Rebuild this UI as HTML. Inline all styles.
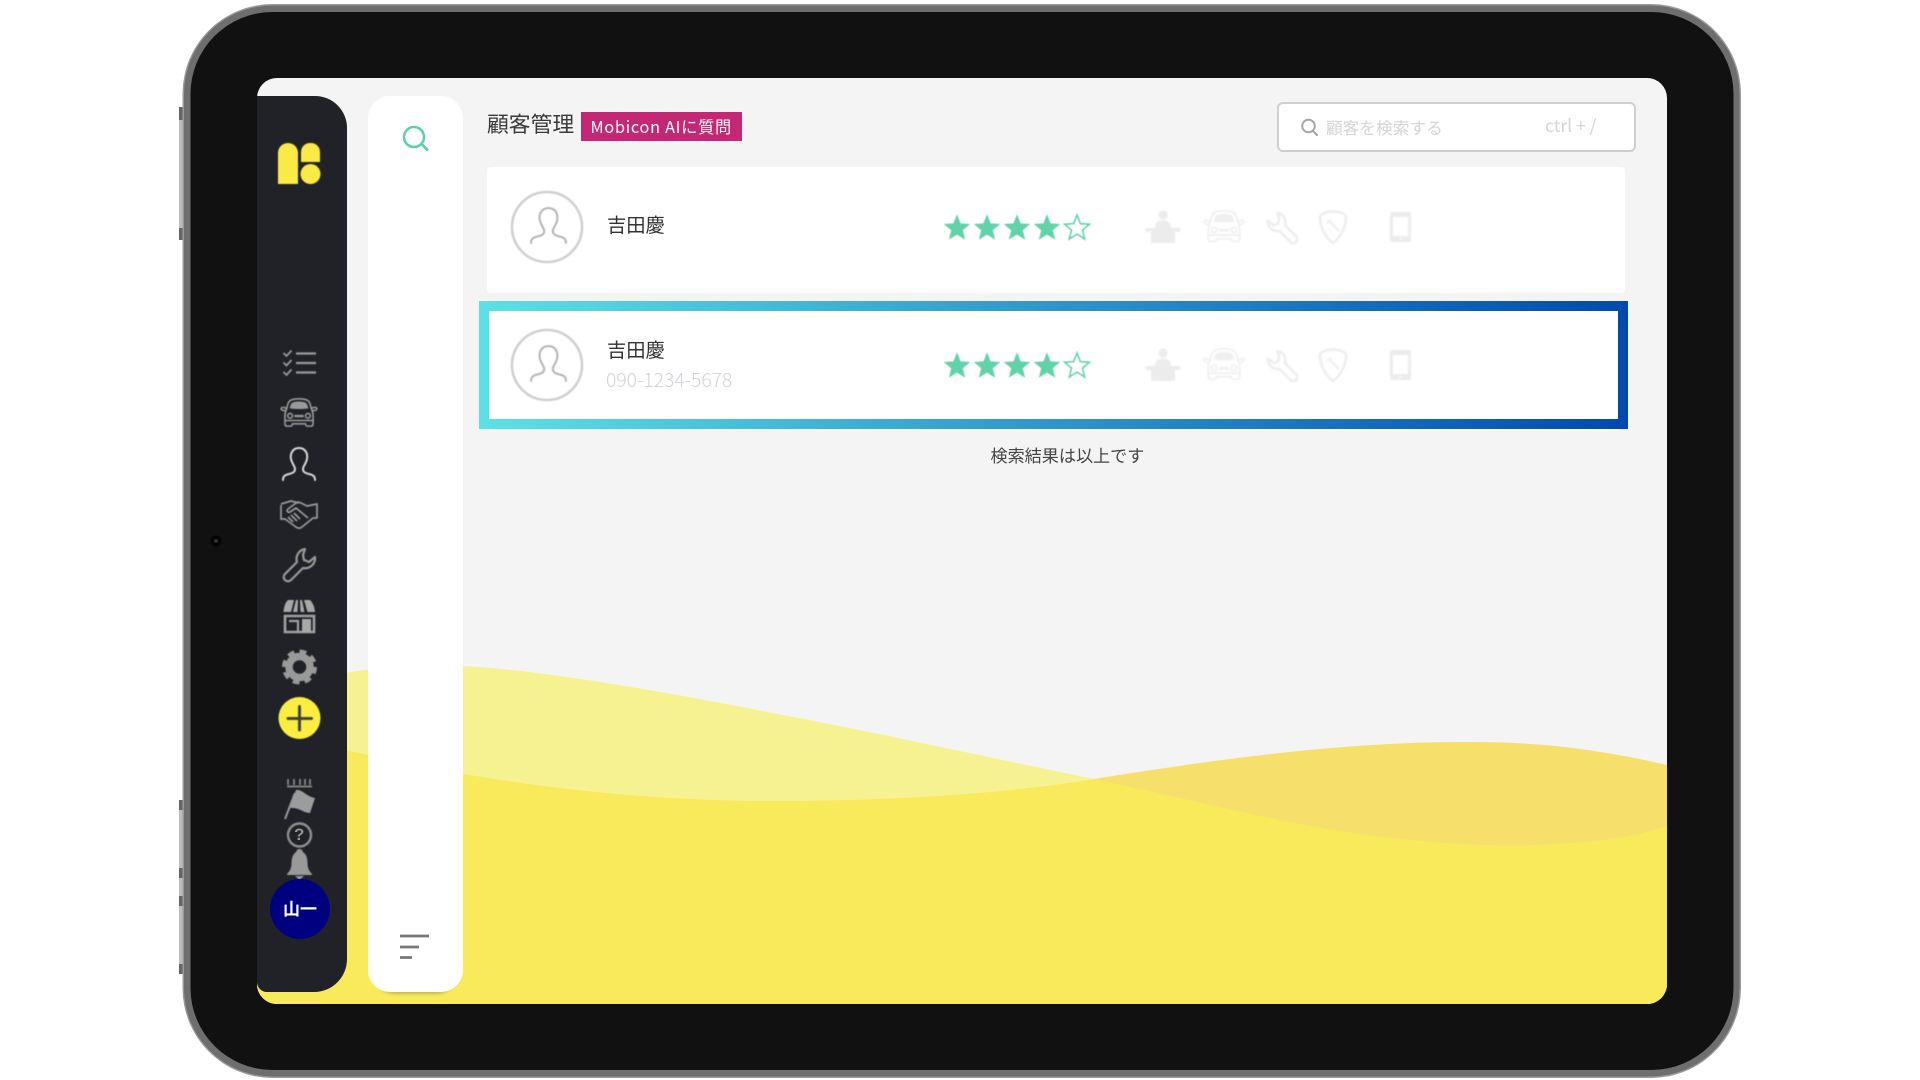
<!DOCTYPE html>
<html lang="ja"><head><meta charset="utf-8"><title>顧客管理</title>
<style>
html,body{margin:0;padding:0;width:1920px;height:1080px;background:#fff;overflow:hidden}
svg.main{position:absolute;left:0;top:0}
.t{position:absolute;white-space:nowrap;font-family:"Noto Sans CJK JP","Liberation Sans",sans-serif;line-height:1;filter:blur(.35px)}
</style></head><body>
<svg class="main" width="1920" height="1080" viewBox="0 0 1920 1080" xmlns="http://www.w3.org/2000/svg">
<defs>
<linearGradient id="g" x1="0" x2="1" y1="0" y2="0"><stop offset="0" stop-color="#5ce1e6"/><stop offset="1" stop-color="#004aad"/></linearGradient>
<clipPath id="sc"><rect x="257" y="78" width="1410" height="926" rx="20"/></clipPath>
<filter id="b"><feGaussianBlur stdDeviation=".5"/></filter>
<filter id="sh" x="-20%" y="-20%" width="140%" height="140%"><feGaussianBlur stdDeviation="1.5"/></filter>
<symbol id="person" viewBox="0 0 34 34"><path d="M1 33C1 29 3 28 7 27C11 26 13 25 13 22C13 19 10 17 9 12C8 6 11 1 17 1C23 1 26 6 25 12C24 17 21 19 21 22C21 25 23 26 27 27C31 28 33 29 33 33" fill="none" stroke="currentColor" stroke-width="2" stroke-linecap="round"/></symbol>
<symbol id="star" viewBox="0 0 28 28"><path d="M14 1.2L17.6 10.4L27.3 11L19.8 17.3L22.2 26.8L14 21.6L5.8 26.8L8.2 17.3L.7 11L10.4 10.4Z"/></symbol>
<g id="stars"><use href="#star" x="943" y="0" width="28" height="28" fill="#62d2a9"/><use href="#star" x="973" y="0" width="28" height="28" fill="#62d2a9"/><use href="#star" x="1003" y="0" width="28" height="28" fill="#62d2a9"/><use href="#star" x="1033" y="0" width="28" height="28" fill="#62d2a9"/><path transform="translate(1064 1) scale(.93)" d="M14 1.2L17.6 10.4L27.3 11L19.8 17.3L22.2 26.8L14 21.6L5.8 26.8L8.2 17.3L.7 11L10.4 10.4Z" fill="#fff" stroke="#62d2a9" stroke-width="1.8"/></g>
<symbol id="car" viewBox="0 0 40 32"><g fill="none" stroke="currentColor" stroke-width="1.700" stroke-linejoin="round"><path d="M7 30C5 30 5 28 5 26V19C5 15 6 13 7 11C8 6 9 3 12 2C16 .5 24 .5 28 2C31 3 32 6 33 11C34 13 35 15 35 19V26C35 28 35 30 33 30H29C28 30 27 29 27 27.500H13C13 29 12 30 11 30Z"/><path d="M7 11.500C5 9.500 1 9.500 1 11.500C1 13.500 4 13.500 6 13.500M33 11.500C35 9.500 39 9.500 39 11.500C39 13.500 36 13.500 34 13.500"/><circle cx="10.500" cy="19" r="2.500"/><circle cx="29.500" cy="19" r="2.500"/><path d="M5 24H35"/></g><path d="M10 11C11 7 12 5 14 4.500C18 3.500 22 3.500 26 4.500C28 5 29 7 30 11C24 12 16 12 10 11Z" fill="currentColor"/><rect x="15" y="18" width="10" height="2.500" fill="currentColor"/></symbol>
<g id="rowicons" color="#efefef" filter="url(#b)">
<circle cx="1163" cy="3" r="4.600" fill="#ececec"/>
<path d="M1155 16C1155 10 1159 8.500 1163 8.500C1167 8.500 1171 10 1171 16H1179C1181 16 1181 20 1179 20H1175V31H1151V20H1147C1145 20 1145 16 1147 16Z" fill="#ececec"/>
<use href="#car" x="1203" y="-2" width="42" height="33.500"/>
<path transform="translate(1299 -1) scale(-.94 .94)" d="M23 2a10 10 0 0 0-8 13L3 27a4 4 0 0 0 6 6l12-12a10 10 0 0 0 12-11l-6 5-5-2-1-5z" fill="none" stroke="#ececec" stroke-width="2.600" stroke-linejoin="round"/>
<path d="M1333 -.5C1326 -.5 1320 2.500 1320 5C1320 15 1325 25 1333 31C1341 25 1346 15 1346 5C1346 2.500 1340 -.5 1333 -.5Z" fill="none" stroke="#ececec" stroke-width="2.400"/>
<path d="M1329 9L1339 19M1327 11l4-3" fill="none" stroke="#f0f0f0" stroke-width="2.600"/>
<rect x="1390" y="0" width="21" height="30" rx="2" fill="#ececec"/><rect x="1393" y="5" width="15" height="19" fill="#fff"/><circle cx="1400.500" cy="27" r="1" fill="#fff"/>
</g>
</defs>

<!-- side buttons -->
<rect x="179" y="107" width="5" height="133" fill="#bdbdbd"/><rect x="179" y="107" width="5" height="13" fill="#666"/><rect x="179" y="228" width="5" height="12" fill="#666"/>
<rect x="179" y="800" width="5" height="173" fill="#bdbdbd"/><rect x="179" y="800" width="5" height="10" fill="#666"/><rect x="179" y="868" width="5" height="10" fill="#666"/><rect x="179" y="896" width="5" height="10" fill="#666"/><rect x="179" y="964" width="5" height="10" fill="#666"/>
<!-- frame -->
<rect x="182.500" y="4" width="1558.500" height="1074" rx="90" fill="#9a9a9a"/>
<rect x="184" y="5.500" width="1555.500" height="1071" rx="88" fill="#6e6e6e"/>
<rect x="190.500" y="12" width="1543" height="1058" rx="82" fill="#111"/>
<circle cx="216" cy="541" r="5.500" fill="#040404"/><circle cx="216" cy="541" r="1.800" fill="#3a3a3a"/>

<!-- screen -->
<g clip-path="url(#sc)">
<rect x="257" y="78" width="1410" height="926" fill="#f4f4f4"/>
<path d="M257 700C300 680 380 660 463 666C560 671 719 702 849 728C930 744 1010 762 1094 779C1170 795 1250 815 1316 827L1316 1004H257Z" fill="#f7f291"/>
<path d="M1094 779C1200 762 1340 741 1472 742C1550 742 1610 752 1667 765V1004H1094Z" fill="#f6e06b"/>
<path d="M257 730C300 740 335 748 368 755C480 780 620 801 771 801C880 801 1000 795 1094 779C1170 795 1250 815 1316 827C1400 842 1480 847 1534 845C1590 843 1635 838 1667 826V1004H257Z" fill="#f8ea5b"/>
</g>

<!-- sidebar -->
<path d="M257 96H315A32 32 0 0 1 347 128V959A33 33 0 0 1 314 992H267A10 10 0 0 1 257 982Z" fill="#212227"/>
<!-- white panel -->
<rect x="373" y="900" width="85" height="94" rx="22" fill="#8f8730" opacity=".5" filter="url(#sh)"/>
<rect x="368" y="96" width="95" height="896" rx="22" fill="#fff"/>
<circle cx="414" cy="137" r="10" fill="none" stroke="#5fd0a8" stroke-width="2.500"/><path d="M421.500 144L427 149.500" stroke="#5fd0a8" stroke-width="2.800" stroke-linecap="round"/>
<g stroke="#777" stroke-width="2.800"><path d="M400 936H429M400 947H419M400 957.500H412"/></g>

<!-- sidebar icons -->
<g filter="url(#b)">
<path d="M278 184V153A10 10 0 0 1 298 153V184Z" fill="#f9ea45"/>
<path d="M301 162V152A9 9 0 0 1 310 143H311A9 9 0 0 1 320 152V162Z" fill="#f9ea45"/>
<circle cx="310.500" cy="174" r="10" fill="#f9ea45"/>
<g fill="none" stroke="#9a9a9a" stroke-width="1.800"><path d="M283.500 353L286.500 356L291.500 350.500M283.500 362.500L286.500 365.500L291.500 360M283.500 372L286.500 375L291.500 369.500"/></g>
<path d="M296 353.500H316M296 363H316M296 372.500H316" stroke="#9a9a9a" stroke-width="2.200"/>
<use href="#car" x="280" y="398" width="38" height="30" color="#999"/>
<use href="#person" x="282" y="447" width="34" height="34" color="#d8d8d8"/>
<path d="M281 505V519H285L296 527C298 529 301 528 302 527L313 518H317V504L307 506L301 503C299 502 297 502 296 503L288 509C286 511 288 513 290 512L296 508L308 518M299 503L291 501L281 504M288 517L293 522M291 515L297 521M294 513L300 519" fill="none" stroke="#9a9a9a" stroke-width="1.700" stroke-linejoin="round"/>
<path d="M305 549a10 10 0 0 0-8 13L285 574a4 4 0 0 0 6 6l12-12a10 10 0 0 0 12-11l-6 5-5-2-1-5z" fill="none" stroke="#9a9a9a" stroke-width="2.200" stroke-linejoin="round"/>
<path d="M288 600H294L291 612H283.500C284 607 285 603 288 600ZM296 600H298L297.500 612H293ZM300 600H302L304.500 612H300.500ZM304 600H310C313 603 314.500 607 315 612H307.500Z" fill="#a8a8a8"/>
<path d="M285 616H314V632H285Z" fill="none" stroke="#a0a0a0" stroke-width="2.600"/><rect x="302" y="619" width="9" height="13" fill="#a8a8a8"/><path d="M289 621H298V632" fill="none" stroke="#a0a0a0" stroke-width="2.200"/>
<circle cx="299.500" cy="667" r="10.500" fill="none" stroke="#999" stroke-width="7.500"/>
<circle cx="299.500" cy="667" r="15.500" fill="none" stroke="#999" stroke-width="4" stroke-dasharray="6.800 5.370"/>
<circle cx="299.500" cy="718" r="21" fill="#fbee3f"/>
<path d="M288 718.500H311.500M299.500 706.500V730" stroke="#3c3d42" stroke-width="3.300" stroke-linecap="round"/>
<path d="M287 786.500H312M288 785V779M294 785V779M300 785V779M305 785V779M310 785V779" stroke="#8a8a8a" stroke-width="1.700" fill="none"/>
<path d="M285 819L295 793" stroke="#999" stroke-width="2"/>
<path d="M296 790C302 789 307 797 315 798L310 813C303 813 299 807 290 808Z" fill="#9c9c9c"/>
<circle cx="299.500" cy="835" r="11.500" fill="none" stroke="#8f8f8f" stroke-width="2.400"/>
<path d="M299.500 849C302 849 302.500 851 303 852C306 854 307.500 858 307.500 863C307.500 868 309 871 312 874V875H287V874C290 871 291.500 868 291.500 863C291.500 858 293 854 296 852C296.500 851 297 849 299.500 849Z" fill="#999"/>
<path d="M295 876H304L299.500 880Z" fill="#999"/>
</g>
<circle cx="300" cy="909" r="30" fill="#000080"/>

<!-- search box -->
<rect x="1278" y="103" width="357" height="48" rx="5" fill="#fff" stroke="#cfcfcf" stroke-width="2"/>
<circle cx="1308.500" cy="126" r="6.300" fill="none" stroke="#a6a6a6" stroke-width="2"/><path d="M1313 131L1317 135" stroke="#a6a6a6" stroke-width="2.200" stroke-linecap="round"/>

<!-- badge -->
<rect x="581" y="112" width="161" height="29" fill="#c42874"/>

<!-- rows -->
<rect x="487" y="167" width="1138" height="126" rx="4" fill="#fff"/>
<rect x="489" y="419" width="1129" height="12" fill="#fff"/>
<rect x="479" y="301" width="1149" height="128" fill="url(#g)"/>
<rect x="489" y="311" width="1129" height="108" fill="#fff"/>

<g filter="url(#b)">
<circle cx="547" cy="227" r="35" fill="#fff" stroke="#cfcfcf" stroke-width="2.600"/>
<use href="#person" x="530" y="207" width="37" height="37" color="#b5b5b5"/>
<circle cx="547" cy="365" r="35" fill="#fff" stroke="#cfcfcf" stroke-width="2.600"/>
<use href="#person" x="530" y="345" width="37" height="37" color="#b5b5b5"/>
<use href="#stars" y="213"/>
<use href="#stars" y="351"/>
<use href="#rowicons" y="212"/>
<use href="#rowicons" y="350"/>
</g>
</svg>

<div class="t" style="left:487px;top:113px;font-size:21.800px;color:#3a3a3a">顧客管理</div>
<div class="t" style="left:590.500px;top:118px;font-size:16.200px;color:#fff;letter-spacing:.75px">Mobicon AIに質問</div>
<div class="t" style="left:1326px;top:119px;font-size:16.700px;color:#d4d4d4">顧客を検索する</div>
<div class="t" style="left:1545px;top:117px;font-size:17.500px;color:#d4d4d4">ctrl + /</div>
<div class="t" style="left:607px;top:215px;font-size:19.300px;color:#333">吉田慶</div>
<div class="t" style="left:607px;top:340px;font-size:19.300px;color:#333">吉田慶</div>
<div class="t" style="left:606px;top:370px;font-size:19.300px;font-weight:300;color:#d2d2d9">090-1234-5678</div>
<div class="t" style="left:990.500px;top:446px;font-size:17.100px;color:#444">検索結果は以上です</div>
<div class="t" style="left:283px;top:899px;font-size:17px;font-weight:700;color:#fff">山一</div>
<div class="t" style="left:294px;top:826px;font-size:17px;font-weight:700;color:#929292;font-family:'Liberation Sans',sans-serif">?</div>
</body></html>
